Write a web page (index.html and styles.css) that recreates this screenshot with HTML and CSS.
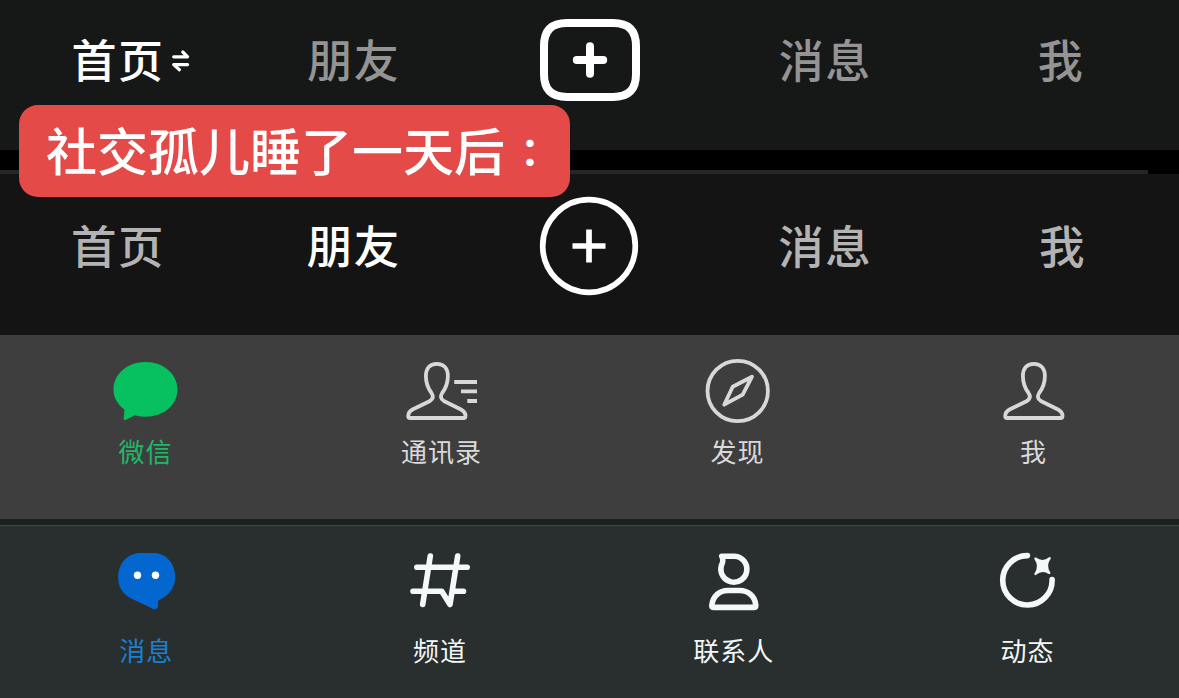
FILE: index.html
```html
<!DOCTYPE html>
<html lang="zh-CN">
<head>
    <meta charset="UTF-8">
    <meta name="viewport" content="width=device-width, initial-scale=1.0">
    <title>社交孤儿</title>
    <link rel="stylesheet" href="styles.css">
</head>
<body>
    <div class="page">
        <!-- Home tab selected -->
        <nav class="text-bar">
            <div class="text-tab active">
                首页
                <svg class="swap-icon" viewBox="170 48 22 25">
                    <path d="M173.7 56.8H187.6L182.8 52M187.6 64.6H173.7L179.4 69.7"/>
                </svg>
            </div>
            <div class="text-tab">朋友</div>
            <div class="text-tab">
                <svg class="plus-square" viewBox="0 0 100 82">
                    <path d="M27 4H73C89 4 96 12 96 27V55C96 70 89 78 73 78H27C11 78 4 70 4 55V27C4 12 11 4 27 4Z"/>
                    <path d="M50 27.3V54.7M36.8 41H63.2" stroke-linecap="round"/>
                </svg>
            </div>
            <div class="text-tab">消息</div>
            <div class="text-tab">我</div>
        </nav>

        <div class="gap"><div class="gap-line"></div></div>

        <!-- Friends tab selected -->
        <nav class="text-bar second">
            <div class="text-tab">首页</div>
            <div class="text-tab active">朋友</div>
            <div class="text-tab">
                <svg class="plus-circle" viewBox="0 0 100 100">
                    <circle cx="50" cy="50" r="46.3"/>
                    <path d="M50 33.5V66.5M33.5 50H66.5"/>
                </svg>
            </div>
            <div class="text-tab">消息</div>
            <div class="text-tab me">我</div>
        </nav>

        <!-- WeChat -->
        <nav class="icon-bar wechat">
            <div class="icon-tab active">
                <svg viewBox="105.5 355 80 70">
                    <path class="fill" d="M145 362C163 362 177 374 177 389.5C177 405 163 416.7 145 416.7C141.5 416.7 138 416.2 134.5 415.2L125.5 419.7C124 420.4 123 419.8 123.2 418.3L124 409.5C117 404.5 113 397.5 113 389.5C113 374 127 362 145 362Z"/>
                </svg>
                <span>微信</span>
            </div>
            <div class="icon-tab">
                <svg viewBox="401.5 355 80 70">
                    <path d="M436.3 363.8C429 363.8 425.4 369 425.4 376C425.4 384 428 389 431 393C433 396 432.5 399 429.5 401L412 409.5C408.5 411.5 407.7 413.5 407.7 416Q407.7 418 409.7 418H463Q465 418 465 416C465 413.5 464 411.5 460.5 409.5L443.3 401C440 399 439.7 396 441.7 393C444.7 389 447.4 384 447.4 376C447.4 369 443.6 363.8 436.3 363.8Z"/>
                    <path d="M453.7 382H476.5M460.5 391.4H476.5M466.8 401H476.5"/>
                </svg>
                <span>通讯录</span>
            </div>
            <div class="icon-tab">
                <svg viewBox="697.5 355 80 70">
                    <circle cx="737.2" cy="391" r="30.2"/>
                    <path d="M751.5 376.7L742.2 394.7L723.7 404.7L732.2 386.7Z"/>
                </svg>
                <span>发现</span>
            </div>
            <div class="icon-tab">
                <svg viewBox="993.5 355 80 70">
                    <path transform="translate(597 0)" d="M436.3 363.8C429 363.8 425.4 369 425.4 376C425.4 384 428 389 431 393C433 396 432.5 399 429.5 401L412 409.5C408.5 411.5 407.7 413.5 407.7 416Q407.7 418 409.7 418H463Q465 418 465 416C465 413.5 464 411.5 460.5 409.5L443.3 401C440 399 439.7 396 441.7 393C444.7 389 447.4 384 447.4 376C447.4 369 443.6 363.8 436.3 363.8Z"/>
                </svg>
                <span>我</span>
            </div>
        </nav>

        <!-- QQ -->
        <nav class="icon-bar qq">
            <div class="icon-tab active">
                <svg viewBox="106.8 547 80 70">
                    <path class="fill" d="M118 577.5C118 562 128.5 553 140 553H153C166 553 175 563.5 175 577C175 587.5 169 595.5 158 600.5L157.8 606Q157 610 153 609C145 604.5 138 602 131 598.5C122 594 118 586.5 118 577.5Z"/>
                    <circle class="eye" cx="137.3" cy="575.3" r="3.7"/>
                    <circle class="eye" cx="155.3" cy="575.3" r="3.7"/>
                </svg>
                <span>消息</span>
            </div>
            <div class="icon-tab">
                <svg viewBox="401 547 80 70">
                    <path d="M416.8 567.3H467.2M430.3 556L422.7 604.5M413 591.3H441.7L450 604.5L457.7 556M455.5 591.3H463.5"/>
                </svg>
                <span>频道</span>
            </div>
            <div class="icon-tab">
                <svg viewBox="694.2 547 80 70">
                    <path d="M722 556.2H735A13 13 0 1 1 721.6 565.5C723.3 562 724 559.5 722 556.2Z"/>
                    <path d="M712 605.5C713 596 720 590.5 728 590.5H740C748 590.5 755.3 596 756 605.5Q756 607.4 754 607.4H714Q712 607.4 712 605.5Z"/>
                </svg>
                <span>联系人</span>
            </div>
            <div class="icon-tab">
                <svg viewBox="987.9 547 80 70">
                    <path d="M1027.3 555.6A24.7 24.7 0 1 0 1052 579.5"/>
                    <path class="star" d="M1035.3 558.5Q1042.5 563.8 1049.7 558.2Q1044.2 565.5 1049.2 573Q1042 568.3 1035.3 574Q1040.6 566 1035.3 558.5Z"/>
                </svg>
                <span>动态</span>
            </div>
        </nav>

        <div class="caption">社交孤儿睡了一天后<span class="colon" lang="zh-TW">：</span></div>
    </div>
</body>
</html>
```
FILE: styles.css
```css
* {
    margin: 0;
    padding: 0;
    box-sizing: border-box;
}

body {
    background: #000;
    font-family: "Noto Sans CJK SC", sans-serif;
}

.page {
    position: relative;
    width: 1179px;
    height: 698px;
    overflow: hidden;
}

svg {
    display: block;
    fill: none;
}

/* text tab bars */
.text-bar {
    display: grid;
    grid-template-columns: repeat(5, 1fr);
    height: 150px;
    padding-bottom: 33px;
    background: #161717;
    color: #949494;
    font-size: 45px;
    font-weight: 500;
    letter-spacing: 1.5px;
}

.text-bar.second {
    height: 161px;
    padding-bottom: 21px;
    background: #141414;
    color: #b3b3b3;
    font-size: 45.5px;
}

.text-tab {
    display: flex;
    align-items: center;
    justify-content: center;
    white-space: nowrap;
}

.text-tab.active {
    color: #fff;
}

.text-tab.me {
    padding-left: 3px;
}

.swap-icon {
    width: 22px;
    height: 25px;
    margin: 3px -28px 0 6px;
    stroke: #fff;
    stroke-width: 3.2;
    stroke-linecap: round;
    stroke-linejoin: round;
}

.plus-square {
    width: 100px;
    height: 82px;
    margin: 3px 0 0 1px;
    stroke: #fff;
    stroke-width: 8;
}

.plus-circle {
    width: 100px;
    height: 100px;
    margin-top: 3px;
    stroke: #fff;
    stroke-width: 5.7;
}

.gap {
    height: 24px;
    padding-top: 20px;
    background: #000;
}

.gap-line {
    width: 1148px;
    height: 4px;
    background: #262626;
}

/* icon tab bars */
.icon-bar {
    display: grid;
    font-size: 26px;
    letter-spacing: 1px;
}

.icon-tab {
    display: flex;
    flex-direction: column;
    align-items: center;
}

.icon-tab svg {
    width: 80px;
    height: 70px;
    stroke-linecap: round;
    stroke-linejoin: round;
}

.icon-tab span {
    line-height: 30px;
}

.icon-tab .fill {
    stroke: none;
}

.wechat {
    grid-template-columns: repeat(4, 296px);
    justify-content: center;
    height: 184px;
    padding-top: 20px;
    background: #3e3e3e;
    color: #dadada;
}

.wechat svg {
    margin-bottom: 11px;
    stroke: #d8d8d8;
    stroke-width: 3.8;
    stroke-linecap: butt;
}

.wechat .active {
    color: #1fb866;
}

.wechat .fill {
    fill: #07c160;
}

.qq {
    grid-template-columns: repeat(4, 293.7px);
    height: 179px;
    padding-top: 22px;
    border-top: 6px solid #1c2120;
    background: #292e2e;
    box-shadow: inset 0 1px #3e4343;
    color: #f4f7f8;
}

.qq svg {
    margin-bottom: 18px;
    stroke: #f4f8fa;
    stroke-width: 5.6;
}

.qq span {
    margin-right: 1px;
}

.qq .active {
    color: #1b80d0;
}

.qq .fill {
    fill: #0467d0;
}

.qq .eye {
    fill: #fff;
    stroke: none;
}

.qq .star {
    fill: #f4f8fa;
    stroke-width: 2.2;
}

/* caption on top of the bars */
.caption {
    position: absolute;
    top: 105px;
    left: 19px;
    width: 551px;
    height: 92px;
    padding-left: 27px;
    border-radius: 19px;
    background: #e44b48;
    color: #fff;
    font-size: 51px;
    font-weight: 500;
    line-height: 88px;
    white-space: nowrap;
}

.colon {
    display: inline-block;
    width: 50px;
    font-family: "Noto Sans CJK TC", sans-serif;
    font-size: 39px;
    font-weight: 700;
    line-height: 1;
    text-align: center;
    vertical-align: 4px;
}
```
